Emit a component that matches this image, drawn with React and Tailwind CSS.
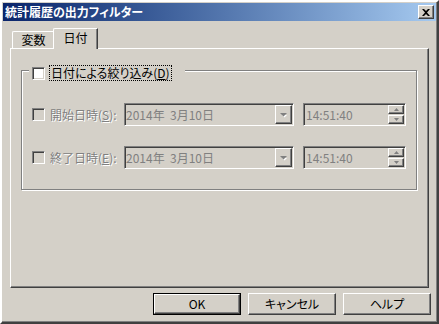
import React from "react";

// classic win2000 face colour and font stack
const FONT = "font-['Noto_Sans_CJK_JP','Noto_Sans',sans-serif] [font-feature-settings:'palt']";

// raised 3d edge (buttons, tabs)
const RAISED =
  "border-t border-l border-white border-r border-b border-r-[#404040] border-b-[#404040] shadow-[inset_-1px_-1px_#808080]";

// sunken 3d edge (fields, checkboxes)
const SUNKEN =
  "border-t border-l border-[#808080] border-r border-b border-r-white border-b-white shadow-[inset_1px_1px_#404040,inset_-1px_-1px_#d4d0c8]";

const CheckBox = ({ disabled }) => (
  <span
    className={`inline-block w-[13px] h-[13px] shrink-0 ${SUNKEN} ${
      disabled ? "bg-[#d4d0c8]" : "bg-white"
    }`}
  />
);

const Mnemonic = ({ before, letter, after }) => (
  <>
    {before}(<span className="underline underline-offset-[1px]">{letter}</span>){after}
  </>
);

const DownArrow = () => (
  <svg width="7" height="4" viewBox="0 0 7 4" className="overflow-visible">
    <path d="M1 1h5L3.5 3.5z" fill="#fff" transform="translate(1 1)" />
    <path d="M0 0h7L3.5 3.5z" fill="#808080" />
  </svg>
);

const SmallArrow = ({ up }) => (
  <svg width="5" height="3" viewBox="0 0 5 3">
    <path d={up ? "M2.5 0L5 3H0z" : "M0 0h5L2.5 3z"} fill="#808080" />
  </svg>
);

// function: DateRow
// disabled date + time row inside the group box
const DateRow = ({ label, letter }) => (
  <div className="flex items-center h-[23px] pl-[10px]">
    <CheckBox disabled />
    <span className="w-[79px] pl-[5px] text-[12px] text-[#808080] [text-shadow:1px_1px_0_#fff] whitespace-nowrap">
      <Mnemonic before={label} letter={letter} after=":" />
    </span>
    <div className={`w-[170px] h-[23px] flex items-center bg-[#d4d0c8] ${SUNKEN}`}>
      <span className="flex-1 pl-[1px] text-[12px] text-[#808080] whitespace-pre">2014年  3月10日</span>
      <span className={`w-[17px] h-[19px] mr-[1px] flex items-center justify-center bg-[#d4d0c8] ${RAISED}`}>
        <DownArrow />
      </span>
    </div>
    <div className={`ml-[9px] w-[103px] h-[23px] flex items-center bg-[#d4d0c8] ${SUNKEN}`}>
      <span className="flex-1 pl-[2px] text-[12px] text-[#808080]">14:51:40</span>
      <span className="flex flex-col gap-[1px] mr-[1px]">
        <span className={`w-[16px] h-[9px] flex items-center justify-center bg-[#d4d0c8] ${RAISED}`}>
          <SmallArrow up />
        </span>
        <span className={`w-[16px] h-[9px] flex items-center justify-center bg-[#d4d0c8] ${RAISED}`}>
          <SmallArrow />
        </span>
      </span>
    </div>
  </div>
);

const App = () => {
  return (
    <div
      className={`w-[439px] h-[324px] bg-[#d4d0c8] text-black ${FONT} border-2 border-t-white border-l-white border-r-[#404040] border-b-[#404040] shadow-[inset_-1px_-1px_#808080] overflow-hidden`}
    >
      {/* title bar */}
      <div className="mx-px mt-px h-[18px] flex items-center bg-gradient-to-r from-[#0a246a] to-[#a6caf0]">
        <span className="flex-1 pl-[2px] text-[12px] font-bold text-white leading-none whitespace-nowrap">
          統計履歴の出力フィルター
        </span>
        <button className={`w-[16px] h-[14px] mr-[2px] flex items-center justify-center bg-[#d4d0c8] ${RAISED}`}>
          <svg width="8" height="7" viewBox="0 0 8 7">
            <path d="M0 0h2l2 2 2-2h2L5 3.5 8 7H6L4 5 2 7H0l3-3.5z" fill="#000" />
          </svg>
        </button>
      </div>

      <div className="pl-[8px] flex flex-col">
        {/* tabs */}
        <div className="mt-[7px] h-[20px] flex items-end">
          <div className="ml-[2px] w-[43px] h-[17px] flex items-center justify-center border-t border-l border-white border-r border-r-[#404040] shadow-[inset_-1px_0_#808080] rounded-tl-[2px] text-[12px]">
            変数
          </div>
          <div className="relative z-10 -ml-[2px] -mb-px w-[45px] h-[21px] flex items-center justify-center bg-[#d4d0c8] border-t border-l border-white border-r border-r-[#404040] shadow-[inset_-1px_0_#808080] rounded-tl-[2px] text-[12px] pb-[3px]">
            日付
          </div>
        </div>

        {/* tab panel */}
        <div className="w-[419px] h-[240px] border-t border-l border-white border-r border-b border-r-[#404040] border-b-[#404040] shadow-[inset_-1px_-1px_#808080] pt-[21px] pl-[10px]">
          <div className="w-[396px] h-[120px] border border-[#808080] shadow-[inset_1px_1px_#fff,1px_1px_#fff]">
            <div className="-mt-[6px] ml-[7px] pl-[3px] pr-[13px] h-[16px] w-fit flex items-center bg-[#d4d0c8]">
              <CheckBox />
              <span className="ml-[4px] px-px h-[16px] flex items-center border border-dotted border-black text-[12px] whitespace-nowrap">
                <Mnemonic before="日付による絞り込み" letter="D" />
              </span>
            </div>
            <div className="mt-[22px] flex flex-col gap-[20px]">
              <DateRow label="開始日時" letter="S" />
              <DateRow label="終了日時" letter="E" />
            </div>
          </div>
        </div>

        {/* dialog buttons */}
        <div className="mt-[5px] pr-[6px] flex justify-end gap-[7px] text-[12px]">
          <button className="w-[88px] h-[22px] border border-black">
            <span className={`w-full h-full flex items-center justify-center ${RAISED}`}>OK</span>
          </button>
          <button className={`w-[88px] h-[22px] flex items-center justify-center ${RAISED}`}>キャンセル</button>
          <button className={`w-[88px] h-[22px] flex items-center justify-center ${RAISED}`}>ヘルプ</button>
        </div>
      </div>
    </div>
  );
};

export default App;
